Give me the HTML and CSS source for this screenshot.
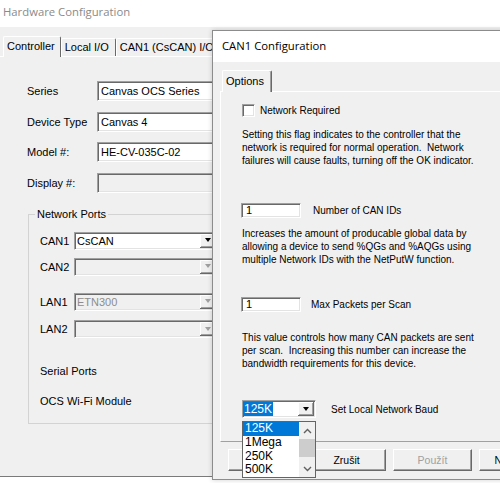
FILE: index.html
```html
<!DOCTYPE html>
<html>
<head>
<meta charset="utf-8">
<title>Hardware Configuration</title>
<link rel="stylesheet" href="styles.css">
</head>
<body>
<div class="main">
  <div class="main-title">Hardware Configuration</div>
  <div class="tabs">
    <div class="tab tab-sel">Controller</div>
    <div class="tab">Local I/O</div>
    <div class="tab">CAN1 (CsCAN) I/O</div>
  </div>
  <div class="page">
    <div class="form">
      <div class="row"><span class="lbl">Series</span><div class="field">Canvas OCS Series</div></div>
      <div class="row"><span class="lbl">Device Type</span><div class="field">Canvas 4</div></div>
      <div class="row"><span class="lbl">Model #:</span><div class="field">HE-CV-035C-02</div></div>
      <div class="row"><span class="lbl">Display #:</span><div class="field field-off"></div></div>
    </div>
    <fieldset class="group">
      <legend>Network Ports</legend>
      <div class="port port-first"><span class="plbl">CAN1</span><div class="combo"><span class="ctext">CsCAN</span><span class="cbtn"><i class="tri"></i></span></div></div>
      <div class="port port-s"><span class="plbl">CAN2</span><div class="combo combo-off"><span class="ctext"></span><span class="cbtn"><i class="tri"></i></span></div></div>
      <div class="port port-l"><span class="plbl">LAN1</span><div class="combo combo-off"><span class="ctext">ETN300</span><span class="cbtn"><i class="tri"></i></span></div></div>
      <div class="port port-m"><span class="plbl">LAN2</span><div class="combo combo-off"><span class="ctext"></span><span class="cbtn"><i class="tri"></i></span></div></div>
      <div class="item item-first">Serial Ports</div>
      <div class="item">OCS Wi-Fi Module</div>
    </fieldset>
  </div>
</div>

<div class="dlg">
  <div class="dlg-title">CAN1 Configuration</div>
  <div class="dlg-body">
    <div class="dtabs"><div class="dtab">Options</div></div>
    <div class="panel">
      <div class="chk-row"><span class="chk"></span><span>Network Required</span></div>
      <p class="desc d1">Setting this flag indicates to the controller that the<br>network is required for normal operation.&nbsp; Network<br>failures will cause faults, turning off the OK indicator.</p>
      <div class="num-row n1"><div class="edit">1</div><span class="nlbl">Number of CAN IDs</span></div>
      <p class="desc d2">Increases the amount of producable global data by<br>allowing a device to send %QGs and %AQGs using<br>multiple Network IDs with the NetPutW function.</p>
      <div class="num-row n2"><div class="edit">1</div><span class="nlbl nlbl2">Max Packets per Scan</span></div>
      <p class="desc d3">This value controls how many CAN packets are sent<br>per scan.&nbsp; Increasing this number can increase the<br>bandwidth requirements for this device.</p>
      <div class="baud-row"><div class="dcombo"><span class="seltext">125K</span><span class="cbtn"><i class="tri"></i></span></div><span class="blbl">Set Local Network Baud</span></div>
    </div>
    <div class="buttons">
      <div class="btn b-ok">OK</div>
      <div class="btn">Zrušit</div>
      <div class="btn btn-off">Použít</div>
      <div class="btn">Nápověda</div>
    </div>
  </div>
  <div class="droplist">
    <div class="opts">
      <div class="opt opt-sel">125K</div>
      <div class="opt">1Mega</div>
      <div class="opt">250K</div>
      <div class="opt">500K</div>
    </div>
    <div class="sbar">
      <div class="sb-btn"><svg width="9" height="6" viewBox="0 0 9 6"><polyline points="1,5 4.5,1.5 8,5" fill="none" stroke="#606060" stroke-width="1.4"/></svg></div>
      <div class="sb-track"><div class="sb-thumb"></div></div>
      <div class="sb-btn"><svg width="9" height="6" viewBox="0 0 9 6"><polyline points="1,1 4.5,4.5 8,1" fill="none" stroke="#606060" stroke-width="1.4"/></svg></div>
    </div>
  </div>
</div>
</body>
</html>
```

FILE: styles.css
```css
* { box-sizing: border-box; }
html, body { margin: 0; padding: 0; }
body {
  width: 500px;
  height: 483px;
  overflow: hidden;
  position: relative;
  background: #fff;
  font-family: "Liberation Sans", Arial, sans-serif;
  color: #000;
}

/* ---------- main window ---------- */
.main {
  height: 477px;
  background: #f0f0f0;
  border-bottom: 1px solid #7a7a7a;
}
.main-title {
  height: 27px;
  background: #fff;
  padding-left: 3px;
  font-family: "Open Sans", sans-serif;
  font-size: 11.3px;
  line-height: 24px;
  color: #8a8a8a;
}
.tabs {
  display: flex;
  align-items: flex-end;
  height: 29px;
  padding-left: 3px;
  font-size: 11px;
}
.tab {
  height: 18px;
  line-height: 17px;
  padding: 0 6px 0 3px;
  border-left: 1px solid #fff;
  border-top: 1px solid #fff;
  border-right: 1px solid #696969;
  border-radius: 2px 2px 0 0;
  white-space: nowrap;
}
.tab-sel {
  height: 21px;
  line-height: 18px;
  padding-right: 5px;
  margin-bottom: -1px;
  position: relative;
  background: #f0f0f0;
}
.page {
  border-top: 1px solid #fff;
}
.form {
  display: flex;
  flex-direction: column;
  gap: 10.67px;
  padding: 24px 0 0 27px;
}
.row {
  display: flex;
  align-items: center;
  height: 20px;
  font-size: 11px;
}
.lbl { width: 70px; }
.field {
  width: 140px;
  height: 20px;
  background: #fff;
  border: 1px solid;
  border-color: #a0a0a0 #fff #fff #a0a0a0;
  box-shadow: inset 1px 1px 0 #696969, inset -1px -1px 0 #e3e3e3;
  padding-left: 3px;
  line-height: 18px;
  white-space: nowrap;
  overflow: hidden;
}
.field-off { background: #f0f0f0; }

.group {
  margin: 15.5px 0 0 28px;
  width: 200px;
  padding: 0 0 15.5px 11px;
  border: 1px solid #d3d3d3;
  min-width: 0;
}
.group legend {
  padding: 0 2px;
  margin-left: -5px;
  font-size: 11px;
  line-height: 13px;
}
.port {
  display: flex;
  align-items: center;
  height: 18px;
  font-size: 11px;
}
.port-first { margin-top: 10.5px; }
.port-s { margin-top: 8px; }
.port-l { margin-top: 17px; }
.port-m { margin-top: 9.5px; }
.plbl { width: 34px; }
.combo {
  width: 144px;
  height: 18px;
  display: flex;
  background: #fff;
  border: 1px solid;
  border-color: #a0a0a0 #fff #fff #a0a0a0;
  box-shadow: inset 1px 1px 0 #696969, inset -1px -1px 0 #e3e3e3;
}
.ctext {
  flex: 1;
  padding-left: 2px;
  line-height: 16px;
  white-space: nowrap;
}
.cbtn {
  width: 16px;
  height: 14px;
  margin: 1px 1px 0 auto;
  background: #f0f0f0;
  display: flex;
  align-items: center;
  justify-content: center;
  border-right: 1px solid #696969;
  border-bottom: 1px solid #696969;
  box-shadow: inset 1px 1px 0 #fff, inset -1px -1px 0 #a0a0a0;
  flex: none;
}
.tri {
  width: 0;
  height: 0;
  border-left: 3.5px solid transparent;
  border-right: 3.5px solid transparent;
  border-top: 4px solid #000;
}
.combo-off { background: #f0f0f0; color: #8d8d8d; }
.combo-off .tri { border-top-color: #a0a0a0; }
.item {
  font-size: 11px;
  line-height: 13px;
  margin-top: 17px;
}
.item-first { margin-top: 26.5px; }

/* ---------- dialog ---------- */
.dlg {
  position: absolute;
  left: 212px;
  top: 30px;
  width: 300px;
  height: 450px;
  background: #f0f0f0;
  border: 1px solid #8c8c8c;
  box-shadow: 0 0 5px rgba(0, 0, 0, 0.18);
}
.dlg-title {
  height: 31px;
  background: #fff;
  padding-left: 9px;
  font-family: "Open Sans", sans-serif;
  font-size: 11.3px;
  line-height: 30px;
}
.dlg-body {
  padding: 8px 0 0 7px;
  font-size: 10px;
}
.dtabs {
  display: flex;
  height: 21px;
  padding-left: 2px;
  font-size: 11px;
}
.dtab {
  height: 22px;
  line-height: 20px;
  padding: 0 7px 0 3px;
  border-left: 1px solid #fff;
  border-top: 1px solid #fff;
  border-right: 1px solid #696969;
  box-shadow: inset -1px 0 0 #a0a0a0;
  border-radius: 2px 2px 0 0;
  position: relative;
  background: #f0f0f0;
}
.panel {
  height: 351px;
  border-top: 1px solid #fff;
  border-left: 1px solid #fff;
  border-bottom: 1px solid #a0a0a0;
  padding: 12px 0 0 21px;
  font-size: 10px;
}
.chk-row {
  display: flex;
  align-items: center;
  height: 13px;
}
.chk {
  width: 13px;
  height: 13px;
  margin-right: 5px;
  background: #fff;
  border: 1px solid;
  border-color: #a0a0a0 #fff #fff #a0a0a0;
  box-shadow: inset 1px 1px 0 #696969, inset -1px -1px 0 #e3e3e3;
}
.desc {
  margin: 0;
  line-height: 13px;
  white-space: nowrap;
}
.d1 { margin-top: 10.5px; }
.d2 { margin-top: 9px; }
.d3 { margin-top: 18.5px; }
.num-row {
  display: flex;
  align-items: center;
  height: 15px;
}
.n1 { margin-top: 36px; }
.n2 { margin-top: 31.5px; }
.edit {
  width: 60px;
  height: 15px;
  margin-left: -1px;
  background: #fff;
  border: 1px solid;
  border-color: #a0a0a0 #fff #fff #a0a0a0;
  box-shadow: inset 1px 1px 0 #696969, inset -1px -1px 0 #e3e3e3;
  padding-left: 4px;
  font-size: 11px;
  line-height: 13px;
}
.nlbl { margin-left: 12px; }
.nlbl2 { margin-left: 10px; }
.baud-row {
  display: flex;
  align-items: center;
  margin-top: 30.5px;
}
.dcombo {
  width: 74px;
  height: 18px;
  display: flex;
  background: #fff;
  border: 1px solid;
  border-color: #a0a0a0 #fff #fff #a0a0a0;
  box-shadow: inset 1px 1px 0 #696969, inset -1px -1px 0 #e3e3e3;
}
.seltext {
  margin: 1px 0 0 0;
  height: 14px;
  padding: 0 1px;
  background: #0078d7;
  color: #fff;
  font-size: 12px;
  line-height: 14px;
}
.blbl { margin-left: 15px; }

.buttons {
  display: flex;
  gap: 7px;
  margin-top: 7px;
  padding-left: 8px;
}
.btn {
  flex: none;
  width: 79px;
  height: 22px;
  border: 1px solid;
  border-color: #fff #696969 #696969 #fff;
  box-shadow: inset -1px -1px 0 #a0a0a0;
  text-align: center;
  line-height: 20px;
  font-size: 10.5px;
  white-space: nowrap;
}
.b-ok { width: 72px; }
.btn-off { color: #a0a0a0; }

.droplist {
  position: absolute;
  left: 29px;
  top: 390px;
  width: 74px;
  height: 57px;
  border: 1px solid #646464;
  background: #fff;
  display: flex;
}
.opts { flex: 1; }
.opt {
  height: 13.75px;
  line-height: 13.75px;
  font-size: 12px;
  padding-left: 2px;
}
.opt-sel { background: #0078d7; color: #fff; }
.sbar {
  width: 16px;
  display: flex;
  flex-direction: column;
  background: #f0f0f0;
}
.sb-btn {
  height: 17px;
  display: flex;
  align-items: center;
  justify-content: center;
}
.sb-track { flex: 1; }
.sb-thumb { height: 18px; background: #cdcdcd; }
```
